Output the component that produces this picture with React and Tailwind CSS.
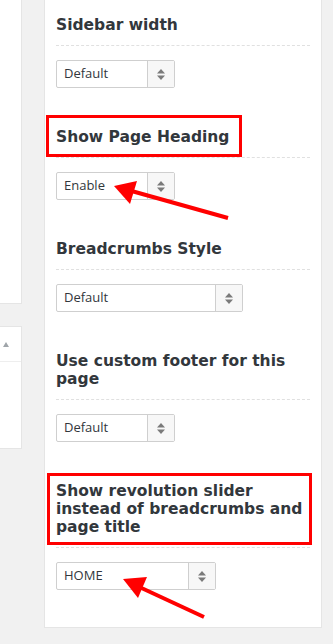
import React from "react";

const headingFont = { fontFamily: '"DejaVu Sans", Verdana, sans-serif' };

function Updown() {
  return (
    <svg width="8" height="11" viewBox="0 0 8 11">
      <polygon points="4,0 8,4.5 0,4.5" fill="#7a7a7a" />
      <polygon points="0,6.5 8,6.5 4,11" fill="#7a7a7a" />
    </svg>
  );
}

function Select({ value, w }) {
  return (
    <div
      className={`flex h-[28px] border border-[#cfcfcf] rounded-[2px] bg-white ${w}`}
    >
      <div className="flex-1 flex items-center pl-[7px] text-[13px] text-[#32373c] font-['Open_Sans',sans-serif]">
        {value}
      </div>
      <div className="w-[27px] border-l border-[#cfcfcf] bg-[#f7f7f7] flex items-center justify-center">
        <Updown />
      </div>
    </div>
  );
}

function Section({ title, value, w, first, box }) {
  return (
    <div className={first ? "pt-[16px]" : "mt-[40px]"}>
      <div className="relative pb-[11px]">
        <div
          className="text-[15.5px] leading-[18px] font-bold text-[#32373c]"
          style={headingFont}
        >
          {title}
        </div>
        {box}
      </div>
      <div className="border-t border-dashed border-[#e0e0e0]" />
      <div className="mt-[14px]">
        <Select value={value} w={w} />
      </div>
    </div>
  );
}

export default function App() {
  return (
    <div className="relative w-[333px] h-[644px] overflow-hidden bg-[#f1f1f1] flex items-start">
      <div className="w-[22px] flex flex-col">
        <div className="h-[304px] bg-white border-r border-b border-[#e5e5e5]" />
        <div className="mt-[22px] h-[123px] bg-white border-t border-r border-b border-[#e5e5e5] flex flex-col">
          <div className="h-[35px] flex items-center pl-[3px] border-b border-[#eeeeee]">
            <svg width="6" height="5" viewBox="0 0 6 5">
              <polygon points="3,0 6,5 0,5" fill="#a0a5aa" />
            </svg>
          </div>
        </div>
      </div>
      <div className="ml-[22px] w-[278px] bg-white border-x border-b border-[#e5e5e5] pl-[11px] pr-[11px] pb-[37px]">
        <Section first title="Sidebar width" value="Default" w="w-[119px]" />
        <Section
          title="Show Page Heading"
          value="Enable"
          w="w-[119px]"
          box={
            <div className="absolute left-[-10px] top-[-13px] w-[196px] h-[42px] border-[3px] border-[#ff0000]" />
          }
        />
        <Section title="Breadcrumbs Style" value="Default" w="w-[187px]" />
        <Section
          title="Use custom footer for this page"
          value="Default"
          w="w-[119px]"
        />
        <Section
          title="Show revolution slider instead of breadcrumbs and page title"
          value="HOME"
          w="w-[160px]"
          box={
            <div className="absolute left-[-9px] top-[-9px] w-[265px] h-[72px] border-[3px] border-[#ff0000]" />
          }
        />
      </div>
      <svg
        className="absolute inset-0 pointer-events-none"
        width="333"
        height="644"
        viewBox="0 0 333 644"
      >
        <line x1="228" y1="218" x2="128" y2="190" stroke="#ff0000" strokeWidth="4" />
        <polygon points="114,186 137,181 130,204" fill="#ff0000" />
        <line x1="204" y1="617" x2="135" y2="585" stroke="#ff0000" strokeWidth="4" />
        <polygon points="123,579 147,577 138,598" fill="#ff0000" />
      </svg>
    </div>
  );
}
